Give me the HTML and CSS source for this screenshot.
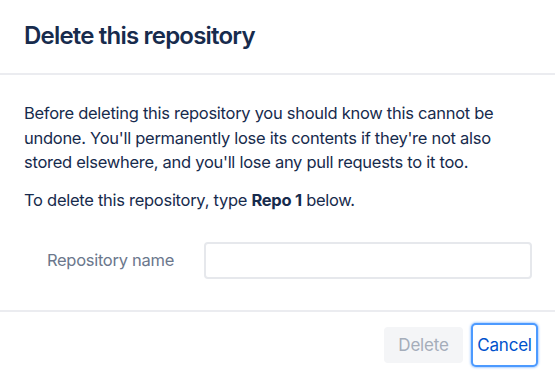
FILE: index.html
```html
<!DOCTYPE html>
<html lang="en">
<head>
  <meta charset="utf-8">
  <title>Delete this repository</title>
  <link rel="stylesheet" href="styles.css">
</head>
<body>
  <div class="dialog">
    <div class="dialog-header">
      <h1>Delete this repository</h1>
    </div>
    <div class="dialog-body">
      <p>Before deleting this repository you should know this cannot be undone. You'll permanently lose its contents if they're not also stored elsewhere, and you'll lose any pull requests to it too.</p>
      <p>To delete this repository, type <strong>Repo 1</strong> below.</p>
      <div class="field-row">
        <label for="repoName">Repository name</label>
        <input type="text" id="repoName">
      </div>
    </div>
    <div class="dialog-footer">
      <button class="btn btn-disabled" disabled>Delete</button>
      <button class="btn btn-link">Cancel</button>
    </div>
  </div>
</body>
</html>
```

FILE: styles.css
```css
body {
  margin: 0;
  font-family: Inter, "Liberation Sans", sans-serif;
  color: #172b4d;
  background: #fff;
}
.dialog {
  width: 555px;
  height: 374px;
  display: flex;
  flex-direction: column;
}
.dialog-header {
  padding: 22px 24px 23px;
  border-bottom: 2px solid #ebecf0;
}
.dialog-header h1 {
  margin: 0;
  font-size: 24px;
  line-height: 28px;
  font-weight: 600;
  letter-spacing: -0.8px;
}
.dialog-body {
  padding: 26px 23px 31px 24px;
  font-size: 16.5px;
  line-height: 24.5px;
  letter-spacing: -0.28px;
}
.dialog-body p {
  margin: 0 0 13px;
}
.dialog-body strong {
  font-weight: 700;
}
.field-row {
  display: flex;
  align-items: center;
  gap: 30px;
  margin-top: 30px;
}
.field-row label {
  width: 150px;
  text-align: right;
  color: #6b778c;
}
.field-row input {
  flex: 1;
  height: 37px;
  border: 2px solid #e6e8ec;
  border-radius: 4px;
  box-sizing: border-box;
  background: #fff;
  font: inherit;
}
.dialog-footer {
  border-top: 2px solid #ebecf0;
  padding: 13px 19px 13px 20px;
  display: flex;
  justify-content: flex-end;
  align-items: center;
  gap: 10px;
}
.btn {
  height: 36px;
  border: none;
  border-radius: 4px;
  font-family: inherit;
  font-size: 17px;
  letter-spacing: -0.2px;
  padding: 0 13px;
}
.btn-disabled {
  background: #f4f5f7;
  color: #a5adba;
  width: 79px;
}
.btn-link {
  height: 40px;
  background: #fff;
  color: #0052cc;
  padding: 0 3px;
  width: 63px;
  border-radius: 3px;
  box-shadow: 0 0 0 2px #4c9aff, 0 0 2px 3px rgba(76, 154, 255, 0.45);
}
```
